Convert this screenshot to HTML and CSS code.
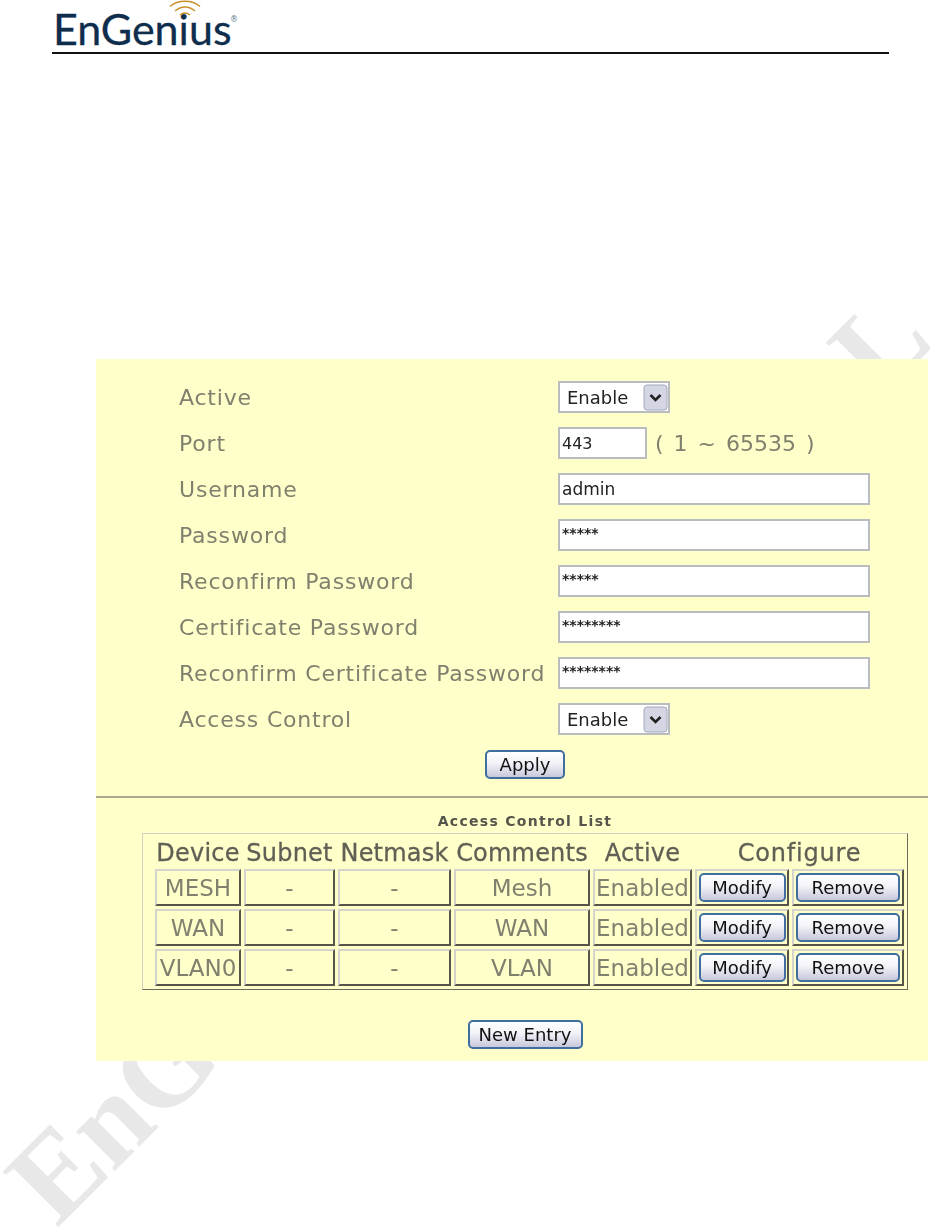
FILE: index.html
```html
<!DOCTYPE html>
<html lang="en">
<head>
<meta charset="utf-8">
<title>EnGenius HTTPS settings</title>
<link rel="stylesheet" href="styles.css">
</head>
<body>
<div class="watermark wm-start">EnGe</div>
<div class="watermark wm-end">L</div>
<header class="page-header">
  <div class="logo">
    <span class="logo-word">EnGenius</span><span class="logo-reg">®</span>
    <svg class="logo-wifi" width="34" height="18" viewBox="0 0 34 18" aria-hidden="true">
      <path d="M2 6.5C10 -0.5 24 -0.5 32 6.5M7 11C13 5.5 21 5.5 27 11M12 15C15 12.5 19 12.5 22 15" fill="none" stroke="#c8922c" stroke-width="1.5"/>
    </svg>
  </div>
</header>
<main class="panel">
  <form class="form-grid">
    <label class="field-label">Active</label>
    <div class="field">
      <span class="select-box"><select class="select"><option>Enable</option></select>
        <svg class="select-arrow" width="25" height="27" viewBox="0 0 25 27" aria-hidden="true"><rect x="1" y="1" width="23" height="25" rx="3" fill="#d4d6e4" stroke="#a4a8bc"/><path d="M7.500 11l5 5 5-5" fill="none" stroke="#222" stroke-width="2.600"/></svg>
      </span>
    </div>
    <label class="field-label">Port</label>
    <div class="field"><input class="input input-port" value="443"><span class="hint">( 1 ~ 65535 )</span></div>
    <label class="field-label">Username</label>
    <div class="field"><input class="input input-wide" value="admin"></div>
    <label class="field-label">Password</label>
    <div class="field"><input class="input input-wide input-mask" value="*****"></div>
    <label class="field-label">Reconfirm Password</label>
    <div class="field"><input class="input input-wide input-mask" value="*****"></div>
    <label class="field-label">Certificate Password</label>
    <div class="field"><input class="input input-wide input-mask" value="********"></div>
    <label class="field-label">Reconfirm Certificate Password</label>
    <div class="field"><input class="input input-wide input-mask" value="********"></div>
    <label class="field-label">Access Control</label>
    <div class="field">
      <span class="select-box"><select class="select"><option>Enable</option></select>
        <svg class="select-arrow" width="25" height="27" viewBox="0 0 25 27" aria-hidden="true"><rect x="1" y="1" width="23" height="25" rx="3" fill="#d4d6e4" stroke="#a4a8bc"/><path d="M7.500 11l5 5 5-5" fill="none" stroke="#222" stroke-width="2.600"/></svg>
      </span>
    </div>
  </form>
  <div class="block center"><button class="btn btn-apply" type="button">Apply</button></div>
  <div class="rule"></div>
  <section class="block">
    <h2 class="list-title">Access Control List</h2>
    <div class="table-frame">
      <table class="acl">
        <colgroup>
          <col class="c1"><col class="c2"><col class="c3"><col class="c4"><col class="c5"><col class="c6"><col class="c7">
        </colgroup>
        <thead>
          <tr><th>Device</th><th>Subnet</th><th>Netmask</th><th>Comments</th><th>Active</th><th class="th-wide" colspan="2">Configure</th></tr>
        </thead>
        <tbody>
          <tr><td>MESH</td><td>-</td><td>-</td><td>Mesh</td><td>Enabled</td><td><button class="btn btn-modify" type="button">Modify</button></td><td><button class="btn btn-remove" type="button">Remove</button></td></tr>
          <tr><td>WAN</td><td>-</td><td>-</td><td>WAN</td><td>Enabled</td><td><button class="btn btn-modify" type="button">Modify</button></td><td><button class="btn btn-remove" type="button">Remove</button></td></tr>
          <tr><td>VLAN0</td><td>-</td><td>-</td><td>VLAN</td><td>Enabled</td><td><button class="btn btn-modify" type="button">Modify</button></td><td><button class="btn btn-remove" type="button">Remove</button></td></tr>
        </tbody>
      </table>
    </div>
    <div class="center new-entry"><button class="btn btn-new" type="button">New Entry</button></div>
  </section>
</main>
</body>
</html>
```
FILE: styles.css
```css
* { box-sizing: border-box; }
html, body { height: 1228px; overflow: hidden; }
body { margin: 0; background: #fff; font-family: "DejaVu Sans", sans-serif; position: relative; }

.watermark {
  position: absolute;
  font-family: "Liberation Serif", serif;
  font-weight: 700;
  font-size: 120px;
  line-height: 1;
  color: #e8e8e8;
  transform: rotate(-45deg);
  transform-origin: left bottom;
  white-space: nowrap;
}
.wm-start { left: 71px; top: 1123px; letter-spacing: -1px; }
.wm-end { left: 894px; top: 294px; }

.page-header {
  margin-left: 52px;
  width: 837px;
  height: 54px;
  border-bottom: 2px solid #111;
}
.logo { position: relative; height: 52px; padding-left: 1px; }
.logo-word {
  font-family: "Lato", sans-serif;
  font-size: 43px;
  line-height: 52px;
  color: #0f2d4c;
  -webkit-text-stroke: .3px #0f2d4c;
  display: inline-block;
  transform: translateY(3px);
}
.logo-reg { position: absolute; left: 178px; top: 15px; font-size: 8px; color: #5a7a90; }
.logo-wifi { position: absolute; left: 116px; top: 0; }

.panel {
  margin: 305px 0 0 96px;
  width: 832px;
  height: 702px;
  background: #ffffc9;
  position: relative;
}
.form-grid {
  display: grid;
  grid-template-columns: 379px 1fr;
  grid-auto-rows: 46px;
  padding: 15px 0 0 83px;
  height: 384px;
  filter: blur(.4px);
}
.field-label {
  font-size: 22px;
  letter-spacing: .8px;
  color: #80806f;
  display: flex;
  align-items: center;
  white-space: nowrap;
}
.field { display: flex; align-items: center; }
.select-box { position: relative; display: block; width: 112px; height: 32px; }
.select {
  appearance: none;
  width: 100%;
  height: 100%;
  border: 2px solid #b9bdc0;
  border-radius: 0;
  background: #fff;
  font: 18px "DejaVu Sans", sans-serif;
  color: #222;
  padding: 0 0 0 7px;
}
.select-arrow { position: absolute; right: 2px; top: 3px; }
.input {
  height: 32px;
  border: 2px solid #b9bdc0;
  background: #fff;
  font: 17px "DejaVu Sans", sans-serif;
  color: #222;
  padding: 0 2px;
  border-radius: 0;
}
.input-port { width: 89px; font-size: 16px; }
.input-wide { width: 312px; }
.input-mask { font-size: 14px; font-weight: 700; padding: 0 2px 4px; }
.hint { font-size: 22px; color: #80806f; margin-left: 8px; white-space: pre; word-spacing: 3px; }

.block { margin-left: 46px; width: 766px; filter: blur(.4px); }
.center { text-align: center; }
.btn {
  font: 18px "DejaVu Sans", sans-serif;
  color: #111;
  height: 29px;
  padding: 0;
  border: 2px solid #3f6f9f;
  border-radius: 5px;
  background: linear-gradient(#fff, #f2f2f8 45%, #c8c8dc);
  display: inline-block;
  vertical-align: top;
}
.btn-apply { width: 80px; margin-top: 7px; }
.btn-modify { width: 87px; }
.btn-remove { width: 104px; }
.btn-new { width: 115px; }
.rule { height: 2px; background: #a9a98f; margin-top: 17px; }
.list-title {
  margin: 15px 0 0;
  height: 20px;
  font-size: 14px;
  line-height: 16px;
  font-weight: 700;
  letter-spacing: 1.3px;
  text-align: center;
  color: #55554c;
}
.table-frame {
  border: 1px solid;
  border-color: #cfcfc4 #6b6b5c #6b6b5c #cfcfc4;
  padding-left: 9px;
}
.acl { border-collapse: separate; border-spacing: 3px; table-layout: fixed; width: 755px; }
.c1 { width: 86px; } .c2 { width: 91px; } .c3 { width: 113px; } .c4 { width: 136px; }
.c5 { width: 99px; } .c6 { width: 94px; } .c7 { width: 112px; }
.acl th {
  height: 29px;
  padding: 3px 0 0;
  font-size: 24px;
  line-height: 26px;
  font-weight: 400;
  letter-spacing: .2px;
  color: #5f5f55;
  white-space: nowrap;
  -webkit-text-stroke: .3px #5f5f55;
}
.acl .th-wide { letter-spacing: .8px; }
.acl td {
  height: 37px;
  padding: 0;
  text-align: center;
  font-size: 23px;
  color: #80806f;
  border: 2px solid;
  border-color: #d4d4cc #55554a #55554a #d4d4cc;
  white-space: nowrap;
}
.new-entry { margin-top: 30px; }
```
